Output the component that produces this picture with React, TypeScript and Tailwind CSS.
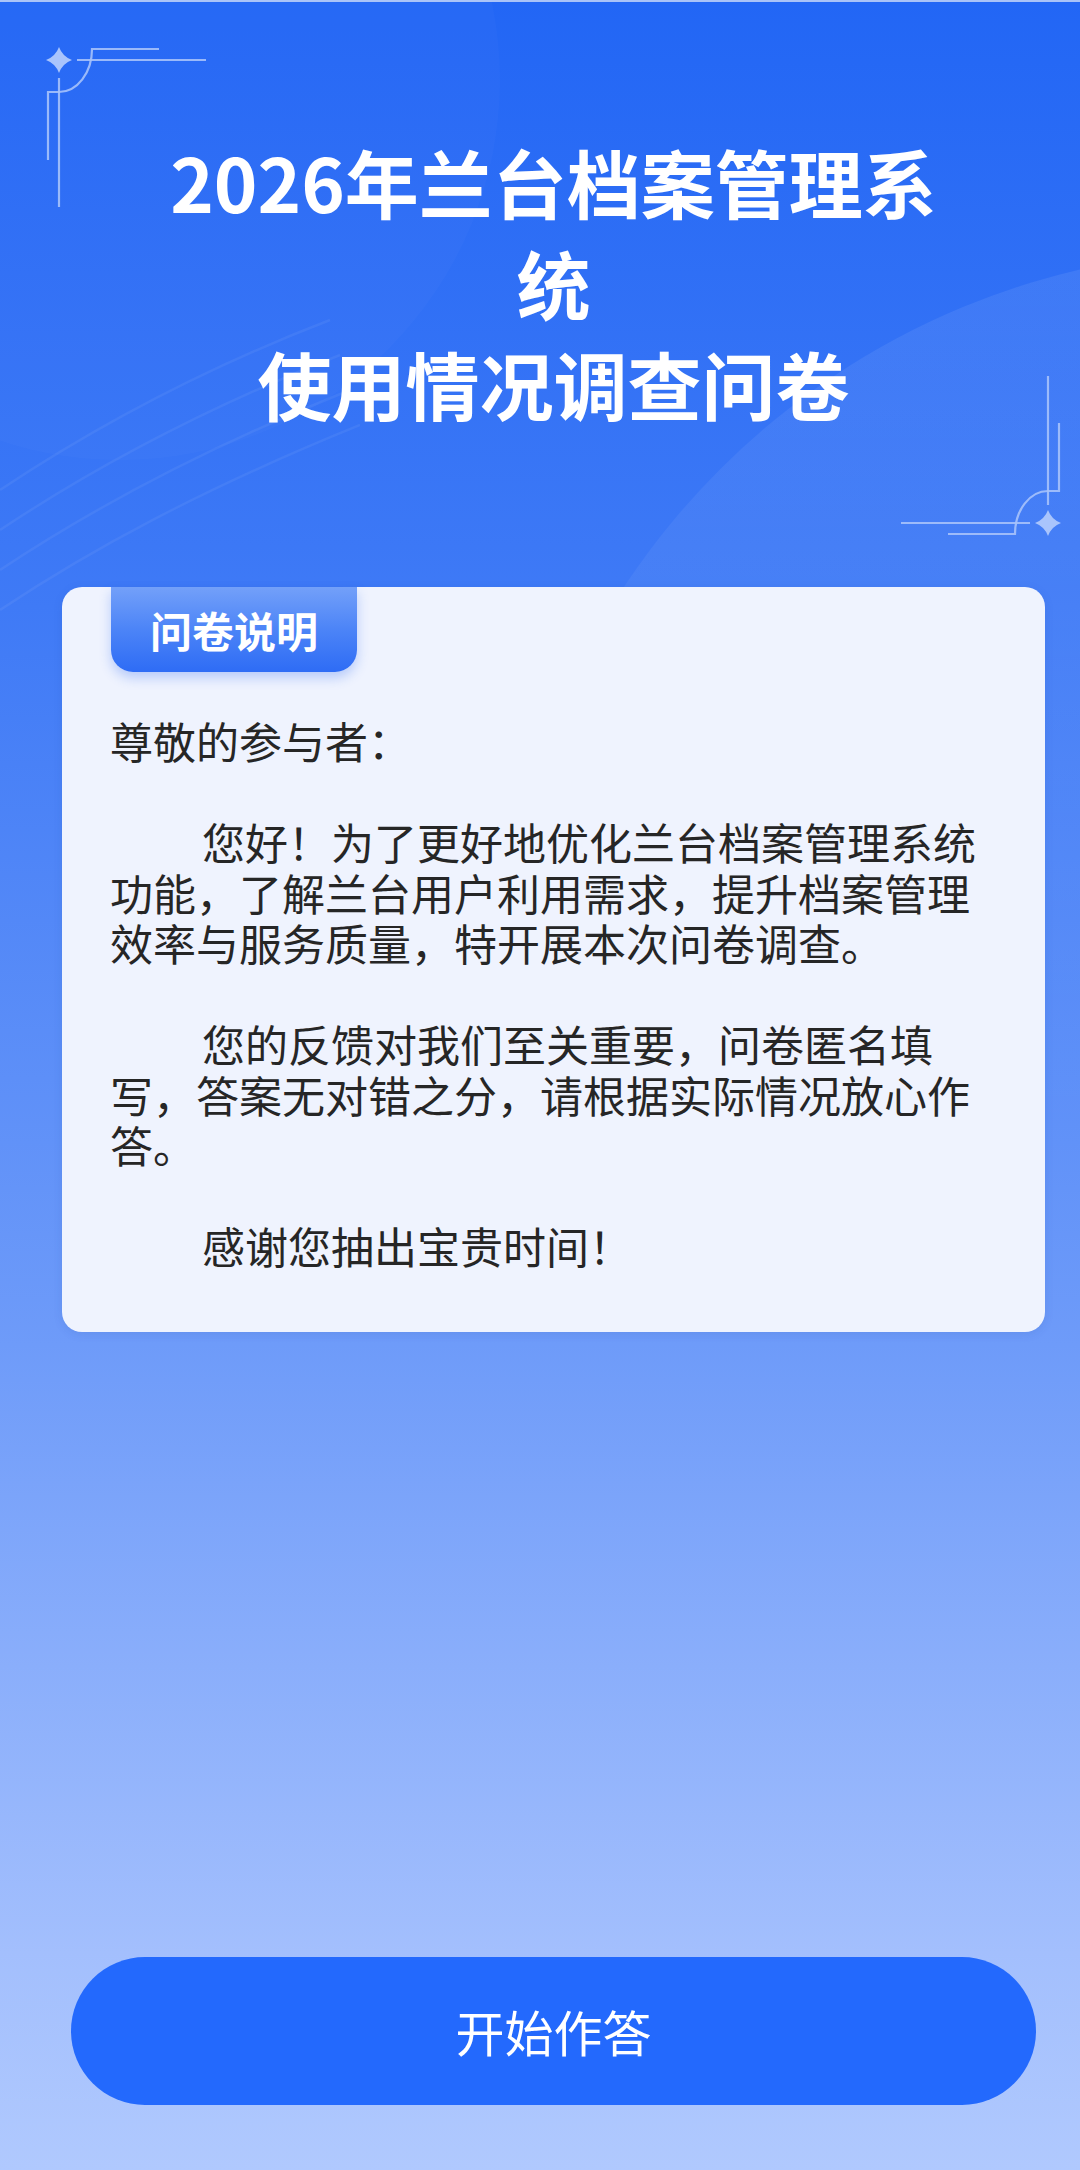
import React from 'react'

const cjk = "font-['Noto_Sans_CJK_SC','Noto_Sans',sans-serif]"

// corner ornament: lines + sparkle, reused rotated for bottom-right
function Corner({ className }: { className: string }) {
  return (
    <svg className={className} width="220" height="220" viewBox="0 0 220 220" fill="none">
      <g stroke="#a6c2fb" strokeWidth="2.2" strokeOpacity="0.9">
        <path d="M77 60H206" />
        <path d="M159 49H92A33 43 0 0 1 59 92H48V160" />
        <path d="M59 78V207" />
      </g>
      <path
        d="M59 47Q62.5 56.5 72 60Q62.5 63.5 59 73Q55.5 63.5 46 60Q55.5 56.5 59 47Z"
        fill="#a9c4fc"
      />
    </svg>
  )
}

function Streaks() {
  return (
    <svg className="absolute left-0 top-[300px]" width="360" height="320" viewBox="0 0 360 320" fill="none">
      <g stroke="#ffffff" strokeOpacity="0.06" strokeWidth="2.5">
        <path d="M0 190C90 130 200 70 330 20" />
        <path d="M0 230C90 170 200 110 340 55" />
        <path d="M0 270C90 210 200 150 350 90" />
        <path d="M0 310C90 250 200 190 360 125" />
      </g>
    </svg>
  )
}

export default function App() {
  return (
    <div
      className={`relative flex min-h-[2170px] w-full flex-col overflow-hidden bg-[linear-gradient(180deg,#2266f5_0%,#3f7af6_28%,#6e9bf9_62%,#a3bffd_90%,#b0c9fe_100%)] ${cjk}`}
    >
      {/* background decorations */}
      <div className="absolute left-0 top-0 h-[2px] w-full bg-[#a9c3f8]" />
      <div className="absolute -left-[260px] -top-[300px] h-[760px] w-[760px] rounded-full bg-white/[0.02]" />
      <div className="absolute left-[500px] top-[250px] h-[1500px] w-[1500px] rounded-full bg-[linear-gradient(180deg,rgba(255,255,255,0.08)_0%,rgba(255,255,255,0.03)_35%,rgba(255,255,255,0)_60%)]" />
      <Streaks />
      <Corner className="absolute left-0 top-0" />
      <Corner className="absolute left-[887px] top-[363px] rotate-180" />

      <div className="relative z-10 flex flex-1 flex-col pl-[62px] pr-[35px]">
        <h1 className="mx-auto mt-[130px] w-[800px] text-center text-[74px] font-bold leading-[101px] text-white">
          2026年兰台档案管理系统
          <br />
          使用情况调查问卷
        </h1>

        <div className="mt-[154px] rounded-[20px] bg-[#eff3fe] pb-[61px] pl-[48px] pr-[47px] shadow-[0_2px_10px_rgba(30,70,160,0.12)]">
          <div className="ml-[1px] flex h-[85px] w-[246px] items-center justify-center rounded-b-[22px] bg-[linear-gradient(180deg,#73a0f9_0%,#4c84f7_50%,#2e6cf5_100%)] shadow-[0_6px_12px_rgba(40,100,240,0.28)]">
            <span className="text-[42px] font-bold text-white">问卷说明</span>
          </div>

          <div className="mt-[43px] text-[43px] leading-[50.5px] text-[#262626]">
            <p>尊敬的参与者：</p>
            <p className="mt-[50.5px] indent-[92px]">
              您好！为了更好地优化兰台档案管理系统功能，了解兰台用户利用需求，提升档案管理效率与服务质量，特开展本次问卷调查。
            </p>
            <p className="mt-[50.5px] indent-[92px]">
              您的反馈对我们至关重要，问卷匿名填写，答案无对错之分，请根据实际情况放心作答。
            </p>
            <p className="mt-[50.5px] indent-[92px]">感谢您抽出宝贵时间！</p>
          </div>
        </div>

        <button className="mx-[9px] mb-[65px] mt-auto flex h-[148px] items-center justify-center rounded-full bg-[#2369fd] text-[49px] text-white">
          开始作答
        </button>
      </div>
    </div>
  )
}
